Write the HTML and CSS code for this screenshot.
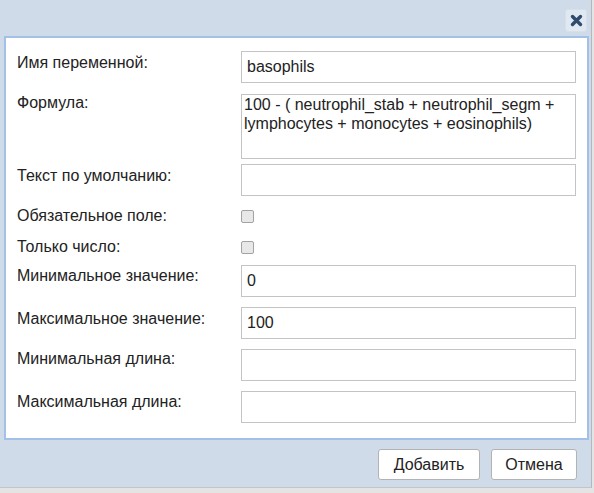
FILE: index.html
```html
<!DOCTYPE html>
<html lang="ru">
<head>
<meta charset="utf-8">
<title>Переменная</title>
<link rel="stylesheet" href="styles.css">
</head>
<body>
<div class="dialog">
  <div class="titlebar">
    <button class="close" type="button" aria-label="Закрыть">
      <svg width="13" height="13" viewBox="0 0 13 13"><path d="M2.5 2.5L10.5 10.5M10.5 2.5L2.5 10.5" stroke="#2f4b6e" stroke-width="3.4" stroke-linecap="round" fill="none"/></svg>
    </button>
  </div>
  <div class="panel">
    <div class="row r1">
      <label class="lbl p3">Имя переменной:</label>
      <input class="field" type="text" value="basophils">
    </div>
    <div class="row r2">
      <label class="lbl p0">Формула:</label>
      <textarea class="field area">100 - ( neutrophil_stab + neutrophil_segm + lymphocytes + monocytes + eosinophils)</textarea>
    </div>
    <div class="row r3">
      <label class="lbl p3">Текст по умолчанию:</label>
      <input class="field" type="text" value="">
    </div>
    <div class="row r4">
      <label class="lbl cb1">Обязательное поле:</label>
      <input class="cb" type="checkbox">
    </div>
    <div class="row r5">
      <label class="lbl cb2">Только число:</label>
      <input class="cb" type="checkbox">
    </div>
    <div class="row r6">
      <label class="lbl p2">Минимальное значение:</label>
      <input class="field" type="text" value="0">
    </div>
    <div class="row r7">
      <label class="lbl p3">Максимальное значение:</label>
      <input class="field" type="text" value="100">
    </div>
    <div class="row r7">
      <label class="lbl p1">Минимальная длина:</label>
      <input class="field" type="text" value="">
    </div>
    <div class="row r7">
      <label class="lbl p2">Максимальная длина:</label>
      <input class="field" type="text" value="">
    </div>
  </div>
  <div class="buttons">
    <button class="btn btn-add" type="button">Добавить</button>
    <button class="btn btn-cancel" type="button">Отмена</button>
  </div>
</div>
</body>
</html>
```
FILE: styles.css
```css
html, body {
  margin: 0;
  padding: 0;
}
body {
  background: #e4e4e4;
  width: 594px;
  height: 493px;
  overflow: hidden;
  font-family: "Liberation Sans", Arial, sans-serif;
  font-size: 16px;
  color: #222;
}
.dialog {
  width: 592px;
  height: 488px;
  background: #cfdbe8;
  border-right: 1px solid #b4b8bd;
  border-bottom: 1px solid #c2c5c9;
  box-sizing: border-box;
}
.titlebar {
  height: 36px;
  position: relative;
}
.close {
  position: absolute;
  left: 565px;
  top: 9px;
  width: 22px;
  height: 23px;
  padding: 0;
  border: 1px solid #d6e0eb;
  border-radius: 3px;
  background: #e0e8f1;
  display: flex;
  align-items: center;
  justify-content: center;
}
.panel {
  margin-left: 4px;
  width: 585px;
  height: 404px;
  box-sizing: border-box;
  border: 2px solid #a2c0e8;
  background: #fff;
  padding: 13px 0 0 11px;
}
.row {
  display: flex;
  align-items: flex-start;
}
.lbl {
  width: 224px;
  flex: none;
  line-height: 18px;
}
.p0 { padding-top: 0; }
.p1 { padding-top: 1px; }
.p2 { padding-top: 2px; }
.p3 { padding-top: 3px; }
.cb1 { margin-top: -3px; }
.cb2 { margin-top: -3px; }
.r2 { margin-top: 11px; }
.r3 { margin-top: 5px; }
.r4 { margin-top: 14px; }
.r5 { margin-top: 16px; }
.r6 { margin-top: 9px; }
.r7 { margin-top: 10px; }
.field {
  width: 335px;
  height: 32px;
  box-sizing: border-box;
  margin: 0;
  border: 1px solid #c4c4c4;
  padding: 0 5px;
  font-family: "Liberation Sans", Arial, sans-serif;
  font-size: 16px;
  color: #222;
  background: #fff;
  outline: none;
}
.area {
  height: 65px;
  padding: 0 2px;
  resize: none;
  line-height: 19px;
  overflow: hidden;
}
.cb {
  appearance: none;
  -webkit-appearance: none;
  width: 13px;
  height: 13px;
  margin: 0;
  border: 1px solid #a3a3a3;
  border-radius: 2px;
  background: #e8e8e8;
  box-sizing: border-box;
}
.buttons {
  display: flex;
  justify-content: flex-end;
  gap: 11px;
  padding: 9px 14px 0 0;
}
.btn {
  height: 31px;
  box-sizing: border-box;
  border: 1px solid #b3b3b3;
  border-radius: 3px;
  background: #fff;
  font-family: "Liberation Sans", Arial, sans-serif;
  font-size: 16px;
  color: #222;
  padding: 0 11px;
}
.btn-add { width: 102px; }
.btn-cancel { width: 86px; }
```
